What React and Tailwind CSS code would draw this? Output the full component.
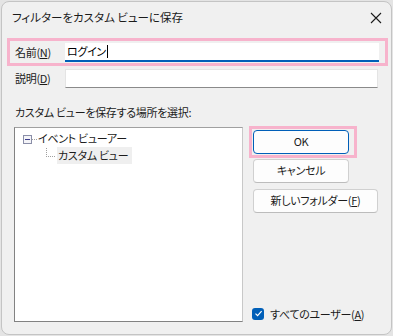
import React from 'react';

const TreeLines = () => (
    <svg width="40" height="30" viewBox="0 0 40 30" className="absolute left-[8px] top-[7px]">
        <rect x="0.5" y="0.5" width="8" height="8" fill="#f4f4f8" stroke="#8a8ea8" />
        <line x1="2" y1="4.5" x2="7" y2="4.5" stroke="#3c3c8c" />
        <line x1="9" y1="4.5" x2="14" y2="4.5" stroke="#a0a0a0" strokeDasharray="1 1" />
        <line x1="23.5" y1="13" x2="23.5" y2="21" stroke="#a0a0a0" strokeDasharray="1 1" />
        <line x1="23" y1="21.5" x2="32" y2="21.5" stroke="#a0a0a0" strokeDasharray="1 1" />
    </svg>
);

const Button = ({ children, primary, className = '' }) => (
    <div
        className={`h-[24px] flex items-center justify-center rounded-[4px] bg-[#fdfdfd] text-[#1b1b1b] whitespace-nowrap border ${
            primary ? 'border-[#005fb8]' : 'border-[#d0d0d0] border-b-[#bcbcbc]'
        } ${className}`}
    >
        {children}
    </div>
);

export default function App() {
    return (
        <div
            className="w-[393px] h-[336px] bg-[#e4e4e4] p-px text-[11px] tracking-[-0.3px] font-['Noto_Sans_CJK_JP','Noto_Sans',sans-serif]"
            style={{ fontFeatureSettings: '"palt" 1' }}
        >
            <div className="h-[334px] rounded-lg border border-[#c4c4c4] bg-[#f0f0f0] flex flex-col overflow-hidden">
                {/* barre de titre */}
                <div className="h-[31px] shrink-0 flex items-center justify-between pl-[10px] pr-[9px] text-[11.5px] tracking-normal text-[#1b1b1b]">
                    <span>フィルターをカスタム ビューに保存</span>
                    <svg width="12" height="12" viewBox="0 0 12 12">
                        <path d="M1 1 L11 11 M11 1 L1 11" stroke="#1b1b1b" strokeWidth="1.1" />
                    </svg>
                </div>

                {/* nom */}
                <div className="ml-[5px] mr-[3px] mt-[5px] h-[28px] border-[3px] border-[#f7b3cc] flex items-center pl-[5px] pr-[6px]">
                    <span className="w-[50px] text-[#1b1b1b]">
                        名前(<span className="underline">N</span>)
                    </span>
                    <div className="flex-1 h-[19px] bg-white border-b-2 border-[#005fb8] flex items-center pl-[2px] text-black">
                        ログイン<span className="w-px h-[13px] bg-black ml-px" />
                    </div>
                </div>

                {/* description */}
                <div className="ml-[13px] mr-[13px] mt-[3px] flex items-center">
                    <span className="w-[50px] text-[#1b1b1b]">
                        説明(<span className="underline">D</span>)
                    </span>
                    <div className="flex-1 h-[19px] bg-white border border-[#e4e4e4] border-b-[#8a8a8a]" />
                </div>

                <div className="ml-[13px] mt-[16px] text-[#1b1b1b]">
                    カスタム ビューを保存する場所を選択:
                </div>

                <div className="flex flex-1 mt-[6px] mb-[12px]">
                    {/* arbre */}
                    <div className="relative ml-[12px] w-[231px] bg-white border border-[#828282] border-r-[#c8c8c8] border-t-[#a0a0a0]">
                        <TreeLines />
                        <div className="absolute left-[23px] top-[2px] text-[#1b1b1b] leading-[17px] whitespace-nowrap">
                            イベント ビューアー
                        </div>
                        <div className="absolute left-[42px] top-[19px] text-[#1b1b1b] leading-[17px] bg-[#efefef] pr-[4px] pl-px whitespace-nowrap">
                            カスタム ビュー
                        </div>
                    </div>

                    {/* boutons */}
                    <div className="flex flex-col ml-[6px] flex-1 pr-[13px]">
                        <div className="w-[108px] border-[3px] border-[#f7b3cc] p-px -mt-[1px]">
                            <Button primary className="w-[96px]">OK</Button>
                        </div>
                        <Button className="w-[96px] ml-[4px] mt-[1px]">キャンセル</Button>
                        <Button className="w-[125px] ml-[4px] mt-[6px]">
                            新しいフォルダー(<span className="underline">F</span>)
                        </Button>
                        <div className="mt-auto ml-[3px] flex items-center gap-[6px] text-[#1b1b1b] whitespace-nowrap">
                            <span className="w-[12px] h-[12px] rounded-[3px] bg-[#005fb8] flex items-center justify-center">
                                <svg width="9" height="9" viewBox="0 0 9 9">
                                    <path d="M1.5 4.6 L3.6 6.6 L7.6 2.2" fill="none" stroke="white" strokeWidth="1.2" />
                                </svg>
                            </span>
                            <span>
                                すべてのユーザー(<span className="underline">A</span>)
                            </span>
                        </div>
                    </div>
                </div>
            </div>
        </div>
    );
}
